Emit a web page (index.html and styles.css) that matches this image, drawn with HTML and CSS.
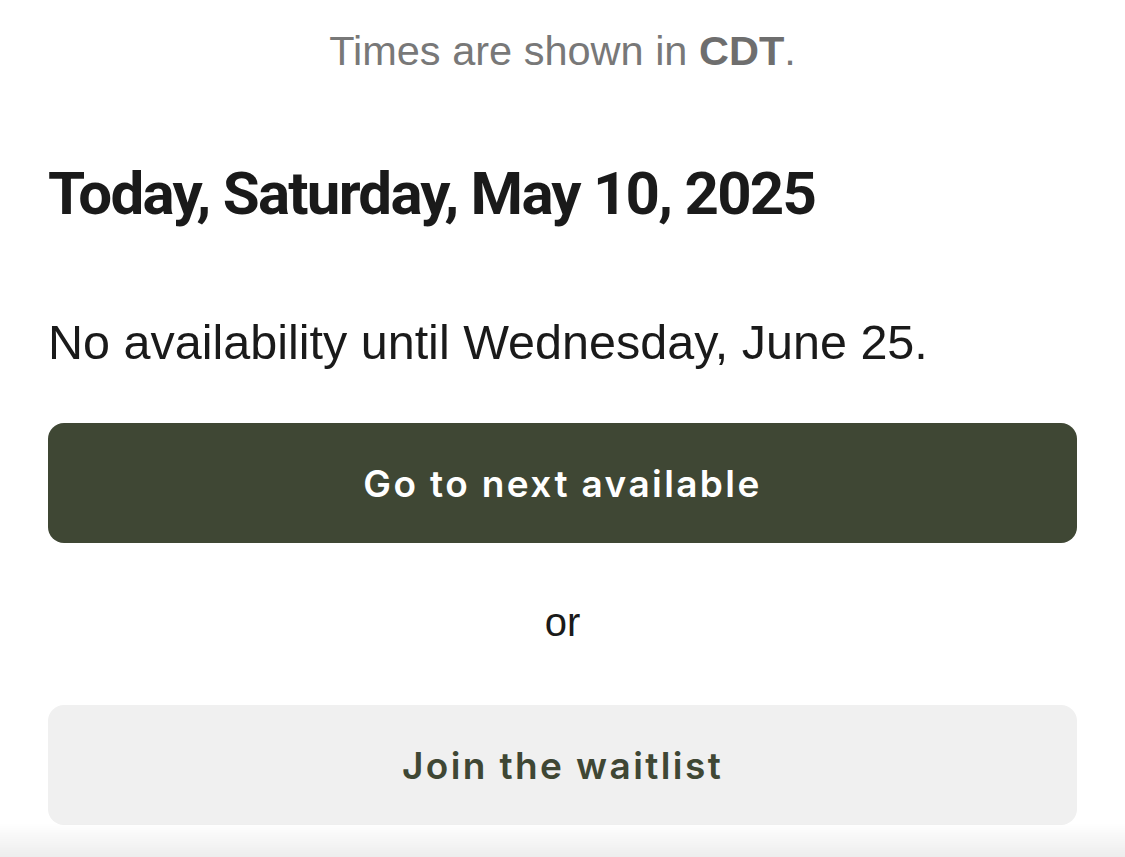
FILE: index.html
```html
<!DOCTYPE html>
<html lang="en">
  <head>
    <meta charset="UTF-8" />
    <meta name="viewport" content="width=device-width, initial-scale=1" />
    <title>Reservation - Availability</title>
    <link rel="stylesheet" href="styles.css">
  </head>
  <body>
    <div class="booking">
      <p class="timezone">Times are shown in <strong>CDT</strong>.</p>

      <h1 class="day-title">Today, Saturday, May 10, 2025</h1>

      <p class="notice">No availability until Wednesday, June 25.</p>

      <button class="btn btn-primary" type="button">Go to next available</button>

      <p class="divider">or</p>

      <button class="btn btn-secondary" type="button">Join the waitlist</button>
    </div>

    <div class="sheet-fade"></div>
  </body>
</html>
```

FILE: styles.css
```css
/* General Body Styles */
body {
  margin: 0;
  font-family: "Liberation Sans", Arial, sans-serif;
  background: #fff;
  color: #1a1a1a;
  overflow: hidden;
}

.booking {
  display: flex;
  flex-direction: column;
  padding: 26px 48px 0;
}

/* Timezone line */
.timezone {
  margin: 0;
  text-align: center;
  font-size: 41.5px;
  line-height: 50px;
  color: #787878;
}

.timezone strong {
  font-weight: 700;
  color: #6e6e6e;
}

/* Heading */
.day-title {
  margin: 82px 0 0;
  font-family: Roboto, "Liberation Sans", sans-serif;
  font-size: 60px;
  line-height: 72px;
  font-weight: 700;
  letter-spacing: -1.75px;
  color: #1a1a1a;
}

.notice {
  margin: 83px 0 0;
  font-size: 48.5px;
  line-height: 58px;
  color: #1a1a1a;
}

/* Buttons */
.btn {
  display: block;
  width: 100%;
  height: 120px;
  border: none;
  border-radius: 16px;
  font-family: Inter, "Liberation Sans", sans-serif;
  font-size: 37px;
  font-weight: 600;
  letter-spacing: 2.4px;
  cursor: pointer;
}

.btn-primary {
  margin-top: 52px;
  background-color: #3f4734;
  color: #fff;
}

.btn-secondary {
  background-color: #f0f0f0;
  color: #3f4734;
}

.divider {
  margin: 0;
  padding: 56px 0 60px;
  text-align: center;
  font-size: 40px;
  line-height: 46px;
  color: #1a1a1a;
}

/* Sheet shadow at the bottom edge */
.sheet-fade {
  position: fixed;
  left: 0;
  right: 0;
  bottom: 0;
  height: 34px;
  background: linear-gradient(to bottom, rgba(0, 0, 0, 0), rgba(0, 0, 0, 0.07));
  pointer-events: none;
}
```
